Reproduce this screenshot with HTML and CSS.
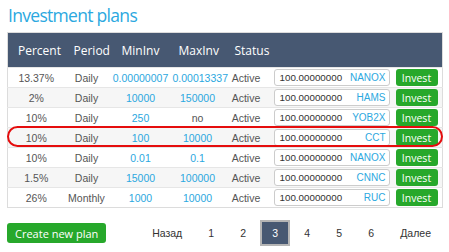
FILE: index.html
```html
<!DOCTYPE html>
<html lang="en">
<head>
    <meta charset="UTF-8">
    <title>Investment plans</title>
    <link rel="stylesheet" href="styles.css">
</head>
<body>

<div class="page">
    <h2 class="title">Investment plans</h2>

    <div class="plans-wrap">
        <table class="plans">
            <colgroup>
                <col class="c-percent">
                <col class="c-period">
                <col class="c-min">
                <col class="c-max">
                <col class="c-status">
                <col class="c-amount">
                <col class="c-btn">
            </colgroup>
            <thead>
                <tr>
                    <th>Percent</th>
                    <th>Period</th>
                    <th>MinInv</th>
                    <th>MaxInv</th>
                    <th>Status</th>
                    <th></th>
                    <th></th>
                </tr>
            </thead>
            <tbody>
                <tr>
                    <td>13.37%</td><td>Daily</td><td class="num">0.00000007</td><td class="num">0.00013337</td><td>Active</td>
                    <td><div class="amount"><span>100.00000000</span><span class="cur">NANOX</span></div></td>
                    <td><button class="invest">Invest</button></td>
                </tr>
                <tr>
                    <td>2%</td><td>Daily</td><td class="num">10000</td><td class="num">150000</td><td>Active</td>
                    <td><div class="amount"><span>100.00000000</span><span class="cur">HAMS</span></div></td>
                    <td><button class="invest">Invest</button></td>
                </tr>
                <tr>
                    <td>10%</td><td>Daily</td><td class="num">250</td><td>no</td><td>Active</td>
                    <td><div class="amount"><span>100.00000000</span><span class="cur">YOB2X</span></div></td>
                    <td><button class="invest">Invest</button></td>
                </tr>
                <tr>
                    <td>10%</td><td>Daily</td><td class="num">100</td><td class="num">10000</td><td>Active</td>
                    <td><div class="amount"><span>100.00000000</span><span class="cur">CCT</span></div></td>
                    <td><button class="invest">Invest</button></td>
                </tr>
                <tr>
                    <td>10%</td><td>Daily</td><td class="num">0.01</td><td class="num">0.1</td><td>Active</td>
                    <td><div class="amount"><span>100.00000000</span><span class="cur">NANOX</span></div></td>
                    <td><button class="invest">Invest</button></td>
                </tr>
                <tr>
                    <td>1.5%</td><td>Daily</td><td class="num">15000</td><td class="num">100000</td><td>Active</td>
                    <td><div class="amount"><span>100.00000000</span><span class="cur">CNNC</span></div></td>
                    <td><button class="invest">Invest</button></td>
                </tr>
                <tr>
                    <td>26%</td><td>Monthly</td><td class="num">1000</td><td class="num">10000</td><td>Active</td>
                    <td><div class="amount"><span>100.00000000</span><span class="cur">RUC</span></div></td>
                    <td><button class="invest">Invest</button></td>
                </tr>
            </tbody>
        </table>
        <!-- red marker round the CCT row -->
        <div class="marker"></div>
    </div>

    <div class="footer">
        <button class="create">Create new plan</button>
        <div class="pager">
            <a>Назад</a>
            <a>1</a>
            <a>2</a>
            <a class="active">3</a>
            <a>4</a>
            <a>5</a>
            <a>6</a>
            <a>Далее</a>
        </div>
    </div>
</div>

</body>
</html>
```

FILE: styles.css
```css
body { margin: 0; background: #fff; font-family: "Liberation Sans", Arial, sans-serif; color: #555; }
.page { width: 435px; padding: 0 0 0 7px; }
.title { margin: 0; padding: 3px 0 0 1px; height: 29px; font-family: "Open Sans", sans-serif; font-weight: normal; font-size: 17.5px; letter-spacing: -0.7px; color: #2ba8e0; }
.plans-wrap { position: relative; }
.plans { width: 435px; table-layout: fixed; border-collapse: collapse; border: 1px solid #dcdcdc; }
.c-percent { width: 57px; }
.c-period { width: 44px; }
.c-min { width: 64px; }
.c-max { width: 50px; }
.c-status { width: 47px; }
.c-amount { width: 123px; }
.c-btn { width: 50px; }
.plans th { background: #475872; color: #fff; height: 34px; padding: 0; font-family: "Open Sans", sans-serif; font-weight: normal; font-size: 12px; text-align: left; white-space: nowrap; overflow: visible; }
.plans th:nth-child(1) { padding-left: 10px; }
.plans th:nth-child(2) { padding-left: 9px; }
.plans th:nth-child(3) { padding-left: 13px; }
.plans th:nth-child(4) { padding-left: 6px; }
.plans th:nth-child(5) { padding-left: 12px; }
.plans td { height: 19px; padding: 0; border-top: 1px solid #e6e6e6; font-size: 10.5px; text-align: center; white-space: nowrap; overflow: visible; color: #555; }
.plans tbody tr:nth-child(even) td { background: #f6f6f6; }
.plans td.num { color: #2ba8e0; }
.amount { display: flex; justify-content: space-between; align-items: center; height: 15px; margin: 0 3px 0 4px; padding: 0 3px 0 5px; border: 1px solid #ccc; border-radius: 3px; background: #fff; color: #333; font-size: 9.8px; }
.amount .cur { color: #2ba8e0; font-size: 10px; }
.invest { display: block; width: 42px; height: 17px; margin: 0 0 0 3px; padding: 0; border: none; border-radius: 3px; background: #27a82b; color: #fff; font-family: "Open Sans", sans-serif; font-size: 10.5px; cursor: pointer; }
.marker { position: absolute; left: 0; top: 94px; width: 432px; height: 17px; border: 2.5px solid #e50d0d; border-radius: 11px; pointer-events: none; }
.footer { display: flex; justify-content: space-between; align-items: center; margin-top: 12px; }
.create { height: 20px; padding: 0 8px; border: none; border-radius: 3px; background: #27a82b; color: #fff; font-family: "Open Sans", sans-serif; font-size: 11px; cursor: pointer; }
.pager { display: flex; gap: 2px; margin-right: -1px; }
.pager a { display: block; min-width: 6px; height: 26px; line-height: 26px; padding: 0 12px; font-size: 10.5px; color: #333; text-align: center; cursor: pointer; }
.pager a.active { box-sizing: border-box; width: 30px; padding: 0; background: #475872; color: #fff; border: 2px solid #b5b5b5; line-height: 22px; }
```
